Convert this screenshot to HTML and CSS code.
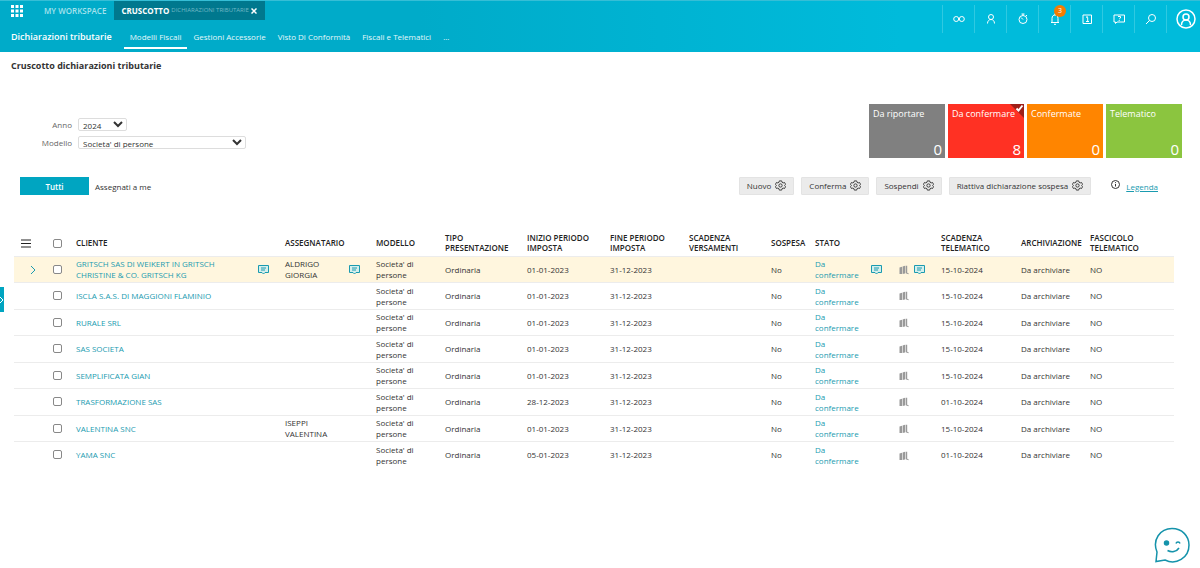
FILE: index.html
```html
<!DOCTYPE html>
<html lang="it">
<head>
    <meta charset="UTF-8">
    <meta name="viewport" content="width=device-width, initial-scale=1.0">
    <title>Cruscotto dichiarazioni tributarie</title>
    <link rel="stylesheet" href="styles.css">
</head>
<body>

<!-- Shared icons -->
<svg class="sprite" aria-hidden="true">
    <symbol id="gear" viewBox="0 0 12 12">
        <path d="M4.7 1h2.6l.4 1.5 1.2.7 1.5-.5 1.1 2-1 1.3 1 1.3-1.1 2-1.5-.5-1.2.7-.4 1.5H4.7l-.4-1.5-1.2-.7-1.5.5-1.1-2 1-1.3-1-1.3 1.1-2 1.5.5 1.2-.7z"/>
        <circle cx="6" cy="6" r="1.8"/>
    </symbol>
    <symbol id="comment" viewBox="0 0 11 10">
        <path d="M.5.5h10v7H7L5.5 9 4 7.500H.5zM3 3h5M3 5h4"/>
    </symbol>
    <symbol id="books" viewBox="0 0 10 10">
        <path d="M.5 2.500 3 1.800v7.200H.5zM3.600 1.500 6 .8v7.700l-2.400.5zM6.600.8H8.200v7l1.400.5v1L6.600 8.300z"/>
    </symbol>
</svg>

<header class="topbar">
    <div class="nav">
        <div class="tabs">
            <button class="apps" aria-label="Applicazioni">
                <svg width="12" height="12" viewBox="0 0 12 12"><path d="M0 0h3v3H0zM4.500 0h3v3h-3zM9 0h3v3H9zM0 4.500h3v3H0zM4.500 4.500h3v3h-3zM9 4.500h3v3H9zM0 9h3v3H0zM4.500 9h3v3h-3zM9 9h3v3H9z"/></svg>
            </button>
            <a class="workspace" href="#">MY WORKSPACE</a>
            <div class="tab">
                <b>CRUSCOTTO</b> <span>DICHIARAZIONI TRIBUTARIE</span>
                <button aria-label="Chiudi"><svg width="6" height="6" viewBox="0 0 6 6"><path d="M.5.5l5 5M5.500.5l-5 5"/></svg></button>
            </div>
        </div>
        <nav class="menu">
            <strong>Dichiarazioni tributarie</strong>
            <a class="active" href="#">Modelli Fiscali</a>
            <a href="#">Gestioni Accessorie</a>
            <a href="#">Visto Di Conformità</a>
            <a href="#">Fiscali e Telematici</a>
            <a href="#">...</a>
        </nav>
    </div>
    <div class="tools">
        <button aria-label="Collegamenti"><svg width="14" height="14" viewBox="0 0 14 14"><circle cx="4.200" cy="7" r="2.500"/><circle cx="9.800" cy="7" r="2.500"/></svg></button>
        <button aria-label="Utente"><svg width="14" height="14" viewBox="0 0 14 14"><circle cx="7" cy="5" r="2.500"/><path d="M3.500 11.500C3.500 9 5 7.500 7 7.500s3.500 1.500 3.500 4"/></svg></button>
        <button aria-label="Timer"><svg width="14" height="14" viewBox="0 0 14 14"><circle cx="7" cy="7.500" r="4"/><path d="M5.500 2h3M7 2v1.500M7 7.500 5 5.500M10 4l1-1"/></svg></button>
        <button aria-label="Notifiche"><svg width="14" height="14" viewBox="0 0 14 14"><path d="M3 10.500h8M4 10.500V6.500C4 4 5.500 3 7 3s3 1 3 3.500v4M7 3V1.500M6 12.300h2"/></svg><span class="badge">3</span></button>
        <button aria-label="Informazioni"><svg width="14" height="14" viewBox="0 0 14 14"><path d="M3 3h8.500v8.500H3zM6.300 5.500h1.400v4M6 9.500h3M7 4v1"/></svg></button>
        <button aria-label="Aiuto"><svg width="14" height="14" viewBox="0 0 14 14"><path d="M2 3h10.500v7H5l-1.500 1.500V10H2zM6 4.500h2.500V6L7.200 7M7.200 8v1"/></svg></button>
        <button aria-label="Cerca"><svg width="14" height="14" viewBox="0 0 14 14"><circle cx="8" cy="6" r="3.500"/><path d="M5.500 8.500 2 12"/></svg></button>
        <button class="account" aria-label="Account"><svg width="20" height="20" viewBox="0 0 20 20"><circle cx="10" cy="10" r="9"/><circle cx="10" cy="8" r="3"/><path d="M5.500 16c0-3 2-5 4.500-5s4.500 2 4.500 5"/></svg></button>
    </div>
</header>

<main>
    <h1>Cruscotto dichiarazioni tributarie</h1>

    <section class="summary">
        <form class="filters">
            <label for="anno">Anno</label>
            <select id="anno" class="year"><option>2024</option></select>
            <label for="modello">Modello</label>
            <select id="modello"><option>Societa' di persone</option></select>
        </form>
        <div class="cards">
            <button class="card grey"><span>Da riportare</span><b>0</b></button>
            <button class="card red"><span>Da confermare</span><b>8</b>
                <svg class="check" width="14" height="14" viewBox="0 0 14 14"><path class="corner" d="M0 0h14v14z"/><path class="tick" d="M6.500 4.500l2 2 4-5"/></svg>
            </button>
            <button class="card orange"><span>Confermate</span><b>0</b></button>
            <button class="card green"><span>Telematico</span><b>0</b></button>
        </div>
    </section>

    <section class="actions">
        <button class="all">Tutti</button>
        <button class="mine">Assegnati a me</button>
        <div class="buttons">
            <button>Nuovo <svg class="gear"><use href="#gear"/></svg></button>
            <button>Conferma <svg class="gear"><use href="#gear"/></svg></button>
            <button>Sospendi <svg class="gear"><use href="#gear"/></svg></button>
            <button>Riattiva dichiarazione sospesa <svg class="gear"><use href="#gear"/></svg></button>
        </div>
        <svg class="info" width="9" height="9" viewBox="0 0 9 9"><circle cx="4.500" cy="4.500" r="4"/><path d="M4.500 4v2.500M4.500 2.200v.9"/></svg>
        <a href="#">Legenda</a>
    </section>

    <table id="clientTable">
        <colgroup>
            <col class="w39"><col class="w23"><col class="w182"><col class="w27"><col class="w64"><col class="w27">
            <col class="w69"><col class="w82"><col class="w83"><col class="w79"><col class="w82"><col class="w44">
            <col class="w56"><col class="w28"><col class="w42"><col class="w80"><col class="w69"><col class="w84">
        </colgroup>
        <thead>
            <tr>
                <th class="first"><button aria-label="Menu"><svg width="10" height="9" viewBox="0 0 10 9"><path d="M0 1h10M0 4.500h10M0 8h10"/></svg></button></th>
                <th><input type="checkbox" aria-label="Seleziona tutti"></th>
                <th>CLIENTE</th>
                <th></th>
                <th>ASSEGNATARIO</th>
                <th></th>
                <th>MODELLO</th>
                <th>TIPO PRESENTAZIONE</th>
                <th>INIZIO PERIODO IMPOSTA</th>
                <th>FINE PERIODO IMPOSTA</th>
                <th>SCADENZA VERSAMENTI</th>
                <th>SOSPESA</th>
                <th>STATO</th>
                <th></th>
                <th></th>
                <th>SCADENZA TELEMATICO</th>
                <th>ARCHIVIAZIONE</th>
                <th>FASCICOLO TELEMATICO</th>
            </tr>
        </thead>
        <tbody>
            <!-- Client rows will be inserted here -->
        </tbody>
    </table>
</main>

<button class="drawer" aria-label="Apri pannello"><svg width="4" height="8" viewBox="0 0 4 8"><path d="M0 1l3 3-3 3"/></svg></button>

<button class="chat" aria-label="Chat">
    <svg width="38" height="38" viewBox="0 0 38 38">
        <path d="M3 35.500 4 26C-1 14 7 2.500 19 2.500c10 0 17 7.500 17 16.500 0 13-13 20.500-24 15z"/>
        <circle class="eye" cx="13.500" cy="17" r="2"/>
        <path d="M23 17.500c.5-2 3.500-2 4 0M14.500 24.500c4 2 9 1.500 11.500-2.500"/>
    </svg>
</button>

<script>
    const clients = [
        { name: 'GRITSCH SAS DI WEIKERT IN GRITSCH CHRISTINE & CO. GRITSCH KG', assignee: 'ALDRIGO GIORGIA', start: '01-01-2023', due: '15-10-2024', selected: true },
        { name: 'ISCLA S.A.S. DI MAGGIONI FLAMINIO', assignee: '', start: '01-01-2023', due: '15-10-2024' },
        { name: 'RURALE SRL', assignee: '', start: '01-01-2023', due: '15-10-2024' },
        { name: 'SAS SOCIETA', assignee: '', start: '01-01-2023', due: '15-10-2024' },
        { name: 'SEMPLIFICATA GIAN', assignee: '', start: '01-01-2023', due: '15-10-2024' },
        { name: 'TRASFORMAZIONE SAS', assignee: '', start: '28-12-2023', due: '01-10-2024' },
        { name: 'VALENTINA SNC', assignee: 'ISEPPI VALENTINA', start: '01-01-2023', due: '15-10-2024' },
        { name: 'YAMA SNC', assignee: '', start: '05-01-2023', due: '01-10-2024' }
    ];

    const tableBody = document.querySelector('#clientTable tbody');
    const comment = '<svg class="comment"><use href="#comment"/></svg>';
    const books = '<svg class="books"><use href="#books"/></svg>';
    const arrow = '<svg class="arrow" width="6" height="10" viewBox="0 0 6 10"><path d="M1 1l4 4-4 4"/></svg>';

    // Populate the table with client data
    clients.forEach(client => {
        const row = tableBody.insertRow();
        const note = client.selected ? comment : '';
        const name = client.name.replace('&', '&amp;');
        if (client.selected) {
            row.className = 'selected';
        }

        const cells = [
            client.selected ? arrow : '',
            `<input type="checkbox" aria-label="${name}">`,
            `<a href="#">${name}</a>`,
            note,
            client.assignee,
            note,
            "Societa' di persone",
            'Ordinaria',
            client.start,
            '31-12-2023',
            '',
            'No',
            '<a href="#">Da confermare</a>',
            note,
            books + note,
            client.due,
            'Da archiviare',
            'NO'
        ];
        cells.forEach(content => {
            row.insertCell().innerHTML = content;
        });
    });
</script>

</body>
</html>
```
FILE: styles.css
```css
* {
    box-sizing: border-box;
}

body {
    margin: 0;
    font-family: "Open Sans", sans-serif;
    font-size: 8px;
    line-height: 11px;
    color: #333;
    background: white;
}

button, select {
    font: inherit;
    color: inherit;
}

button {
    padding: 0;
    border: 0;
    background: none;
}

a {
    color: #1a9bb0;
    text-decoration: none;
}

svg {
    fill: none;
    stroke: currentColor;
}

.sprite {
    position: absolute;
    width: 0;
    height: 0;
}

/* Top bar */
.topbar {
    display: flex;
    justify-content: space-between;
    height: 52px;
    border-top: 1px solid #36bed6;
    background: linear-gradient(90deg, #00abc9 35%, #00bbdb 75%);
    color: white;
}

.topbar a {
    color: #e4f8fb;
}

.tabs {
    display: flex;
    align-items: center;
    height: 19px;
}

.apps {
    display: flex;
    margin-left: 11px;
}

.apps svg {
    fill: white;
    stroke: none;
}

.topbar .workspace {
    margin-left: 21px;
    color: #a5e2ed;
    font-weight: 600;
}

.tab {
    display: flex;
    align-items: center;
    gap: 2px;
    width: 151px;
    height: 19px;
    margin-left: 8px;
    padding: 0 8px 0 7px;
    background: #00788e;
    white-space: nowrap;
}

.tab span {
    color: #72b9c6;
    font-size: 6px;
}

.tab button {
    display: flex;
    margin-left: auto;
}

.tab svg {
    stroke-width: 1.5;
}

.menu {
    display: flex;
    gap: 12px;
    height: 29px;
}

.menu strong {
    margin-left: 11px;
    font-size: 9px;
    font-weight: 600;
    line-height: 33px;
}

.menu a {
    line-height: 34px;
}

.menu .active {
    margin-right: -6px;
    padding: 0 6px;
    border-bottom: 2px solid white;
}

.tools {
    display: flex;
    height: 28px;
    margin-top: 4px;
}

.tools button {
    display: flex;
    position: relative;
    align-items: center;
    justify-content: center;
    width: 32px;
    border-left: 1px solid #2fc9e1;
}

.tools .account {
    width: 34px;
    padding-left: 5px;
}

.account svg {
    stroke-width: 1.5;
}

.badge {
    position: absolute;
    top: 0;
    right: 4px;
    width: 12px;
    height: 12px;
    border-radius: 6px;
    background: #f57c00;
    font-size: 7px;
    line-height: 12px;
}

/* Filters and counters */
h1 {
    margin: 8px 11px 0;
    font-size: 9px;
    font-weight: 700;
    line-height: 12px;
}

.summary {
    display: flex;
    justify-content: space-between;
    margin: 32px 18px 0 20px;
}

.filters {
    display: grid;
    grid-template-columns: 52px 168px;
    gap: 5px 6px;
    align-content: start;
    align-items: center;
    padding-top: 14px;
    color: #666;
    text-align: right;
}

.filters select {
    width: 100%;
    height: 13px;
    padding: 0;
    border: 1px solid #ddd;
    border-radius: 2px;
    background: white;
    color: #333;
    line-height: 9px;
}

.filters .year {
    width: 49px;
}

.cards {
    display: flex;
    gap: 3px;
}

.card {
    display: flex;
    position: relative;
    flex-direction: column;
    justify-content: space-between;
    width: 76px;
    height: 54px;
    padding: 3px 3px 1px 4px;
    color: white;
    font-size: 9px;
    line-height: 14px;
    text-align: left;
}

.card b {
    align-self: flex-end;
    font-size: 15px;
    font-weight: 400;
    line-height: 16px;
}

.grey {
    background: #808080;
}

.red {
    background: #ff3123;
}

.orange {
    background: #ff8500;
}

.green {
    background: #8bc53f;
}

.check {
    position: absolute;
    top: 0;
    right: 0;
}

.corner {
    fill: #9e1f18;
    stroke: none;
}

.tick {
    stroke-width: 2;
}

/* Actions */
.actions {
    display: flex;
    align-items: center;
    height: 18px;
    margin: 19px 42px 0 20px;
}

.all {
    width: 69px;
    height: 18px;
    margin-right: 6px;
    background: #00a5c1;
    color: white;
    font-weight: 600;
}

.buttons {
    display: flex;
    gap: 7px;
    margin-left: auto;
}

.buttons button {
    display: flex;
    align-items: center;
    gap: 4px;
    height: 18px;
    padding: 0 7px 1px;
    border: 1px solid #e3e3e3;
    border-radius: 1px;
    background: #ebebeb;
}

.gear {
    width: 11px;
    height: 11px;
}

.info {
    margin: 0 6px 4px 20px;
}

.actions a {
    text-decoration: underline;
}

/* Client table */
table {
    width: calc(100% - 40px);
    margin: 34px 26px 0 14px;
    border-collapse: collapse;
    table-layout: fixed;
}

th, td {
    padding: 0 10px 0 0;
    text-align: left;
}

th {
    height: 27px;
    padding: 2px 0 0;
    color: #222;
    font-weight: 600;
    line-height: 10px;
}

td {
    height: 26px;
    border-top: 1px solid #ececec;
}

tr:nth-child(even) td {
    height: 27px;
}

th:nth-child(8), th:nth-child(9), th:nth-child(10), th:nth-child(16), th:nth-child(18) {
    padding-right: 14px;
}

td:nth-child(1) {
    padding-left: 16px;
}

td:nth-child(4), td:nth-child(6), td:nth-child(14), td:nth-child(15) {
    padding-right: 0;
}

td svg, th svg {
    display: inline-block;
    vertical-align: middle;
}

.first {
    padding-left: 7px;
}

.selected {
    background: #fff6de;
}

.arrow, .comment {
    color: #1a9bb0;
}

.comment {
    width: 11px;
    height: 10px;
    fill: #d5efec;
}

.books {
    width: 10px;
    height: 10px;
    margin-right: 5px;
    fill: #999;
    stroke: none;
}

input[type="checkbox"] {
    display: block;
    width: 9px;
    height: 9px;
    margin: 0;
    border: 1px solid #888;
    border-radius: 2px;
    background: white;
    appearance: none;
}

input[type="checkbox"]:checked {
    background: #00a5c1;
}

.w23 { width: 23px; }
.w27 { width: 27px; }
.w28 { width: 28px; }
.w39 { width: 39px; }
.w42 { width: 42px; }
.w44 { width: 44px; }
.w56 { width: 56px; }
.w64 { width: 64px; }
.w69 { width: 69px; }
.w79 { width: 79px; }
.w80 { width: 80px; }
.w82 { width: 82px; }
.w83 { width: 83px; }
.w84 { width: 84px; }
.w182 { width: 182px; }

/* Floating controls */
.drawer {
    display: flex;
    position: fixed;
    top: 287px;
    left: 0;
    align-items: center;
    width: 4px;
    height: 25px;
    background: #00a5c1;
    color: white;
}

.chat {
    display: flex;
    position: fixed;
    right: 9px;
    bottom: 4px;
    color: #1593ab;
}

.chat svg {
    stroke-width: 1.5;
}

.chat .eye {
    fill: #1593ab;
}
```
